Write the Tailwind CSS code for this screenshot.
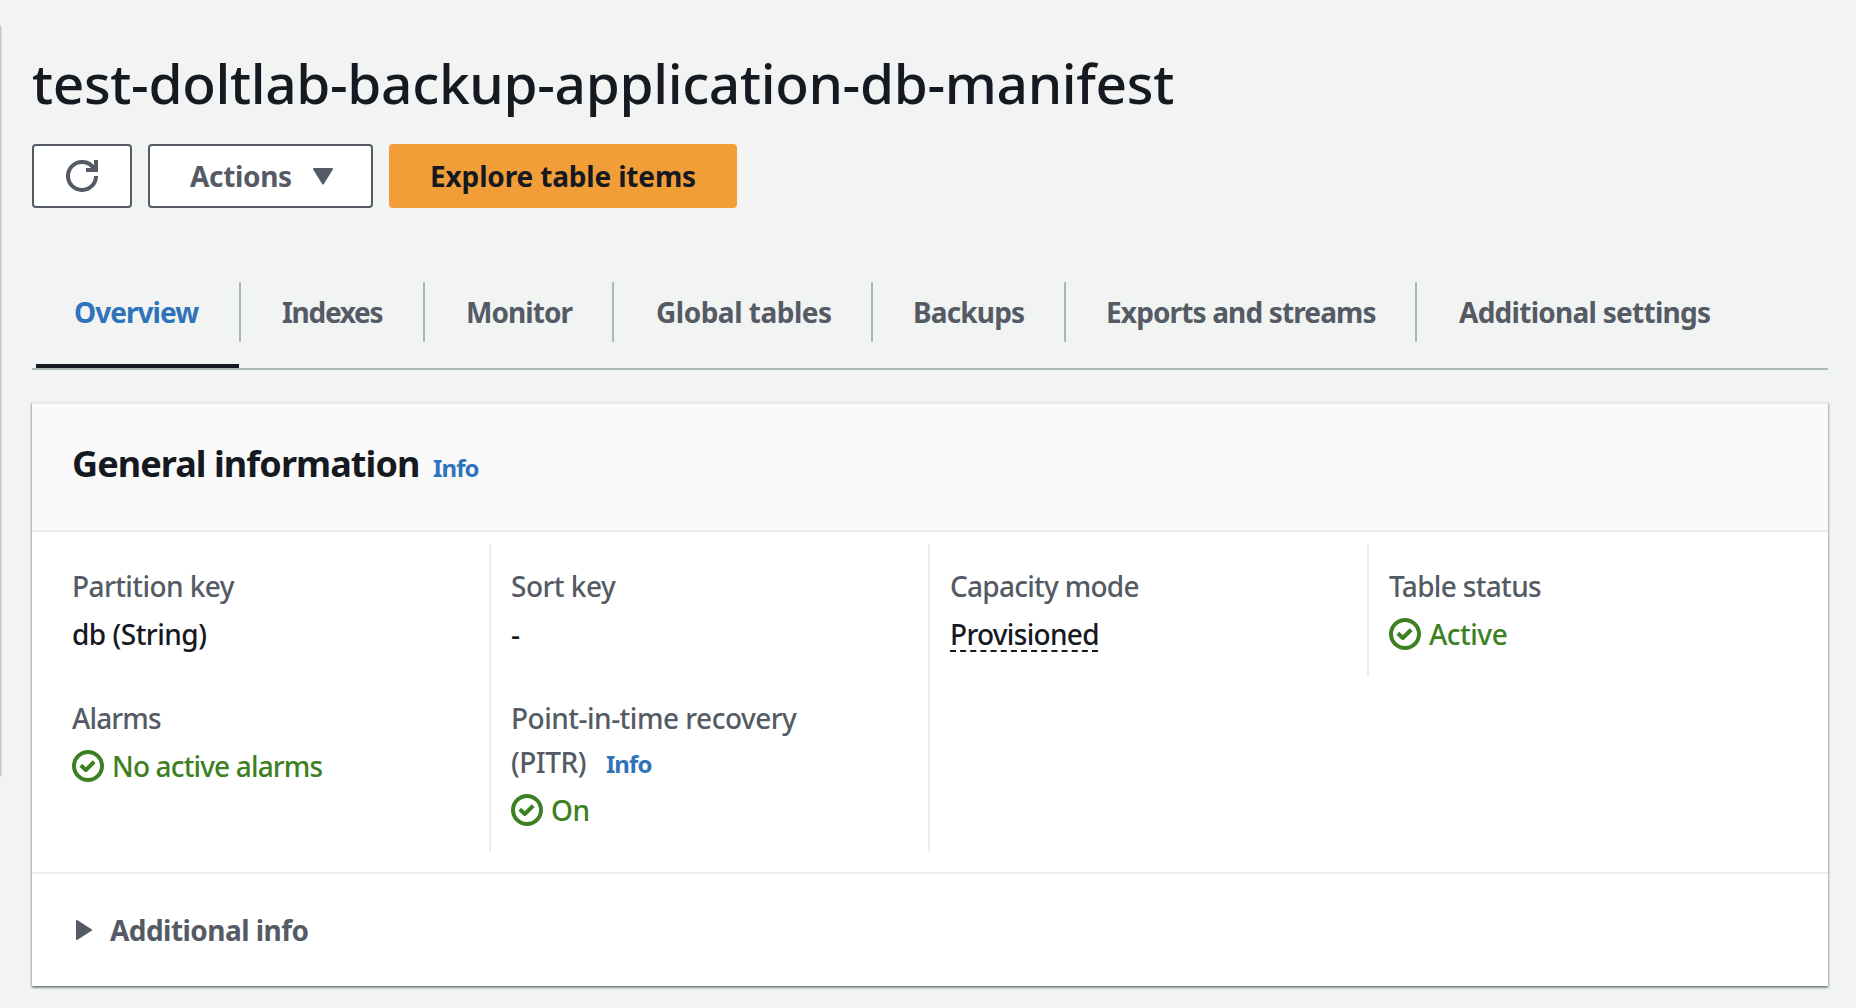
<!DOCTYPE html>
<html lang="en">
<head>
<meta charset="utf-8">
<title>test-doltlab-backup-application-db-manifest</title>
<script src="https://cdn.jsdelivr.net/npm/@tailwindcss/browser@4"></script>
</head>
<body class="relative h-[1008px] overflow-hidden bg-[#f2f3f3] pr-[28px] pl-8 font-['Noto_Sans','Open_Sans',sans-serif] text-[28px] leading-[44px] font-medium text-[#16191f]">
<svg class="hidden">
  <symbol id="ok" viewBox="0 0 16 16"><g fill="none" stroke="currentColor" stroke-width="2"><circle cx="8" cy="8" r="7"/><path d="M4.400 7.600 6.900 10l4.200-4.100" stroke-linejoin="round"/></g></symbol>
</svg>
<!-- edge of the collapsed side panel -->
<div class="absolute top-[26px] left-[-10px] h-[750px] w-[11px] bg-[#c3c4cb] shadow-[0_0_2px_#b9bcc4]"></div>

<h1 class="pt-[45px] text-[55px] leading-[76px] font-medium tracking-[-0.34px] whitespace-nowrap">test-doltlab-backup-application-db-manifest</h1>

<div class="mt-[23px] flex h-16 gap-4 font-bold">
  <button class="flex w-[100px] items-center justify-center rounded-[4px] border-2 border-[#545b64] bg-white text-[#545b64]">
    <svg class="size-8" viewBox="0 0 16 16" fill="none" stroke="currentColor" stroke-width="2"><path d="M10 5h5V0"/><path d="M15 8a6.957 6.957 0 0 1-7 7 6.957 6.957 0 0 1-7-7 6.957 6.957 0 0 1 7-7 6.870 6.870 0 0 1 6.300 4"/></svg>
  </button>
  <button class="flex w-[225px] items-center rounded-[4px] border-2 border-[#545b64] bg-white pl-10 text-[#545b64]">
    <span class="w-[123px] text-left tracking-[-0.34px]">Actions</span>
    <svg class="h-[17px] w-5" viewBox="0 0 20 17" fill="currentColor" stroke="currentColor" stroke-width="2" stroke-linejoin="round"><path d="M1 1h18L10 15.500z"/></svg>
  </button>
  <button class="flex w-[348px] items-center justify-center rounded-[4px] bg-[#f29e38] tracking-[-0.16px]">Explore table items</button>
</div>

<nav class="mt-[74px] flex h-[88px] border-b-2 border-[#aab7b8] leading-[60px] font-bold text-[#545b64] whitespace-nowrap">
  <div class="ml-1 h-[86px] w-[203px] border-b-4 border-[#16191f] pl-[38px] tracking-[-0.95px] text-[#2f73ba]">Overview</div>
  <div class="h-[60px] w-[184px] border-l-2 border-[#aab7b8] pl-[41px] tracking-[-1.3px]">Indexes</div>
  <div class="h-[60px] w-[189px] border-l-2 border-[#aab7b8] pl-[41px] tracking-[-0.95px]">Monitor</div>
  <div class="h-[60px] w-[259px] border-l-2 border-[#aab7b8] pl-[42px] tracking-[-0.49px]">Global tables</div>
  <div class="h-[60px] w-[193px] border-l-2 border-[#aab7b8] pl-[40px] tracking-[-0.85px]">Backups</div>
  <div class="h-[60px] w-[351px] border-l-2 border-[#aab7b8] pl-[40px] tracking-[-0.86px]">Exports and streams</div>
  <div class="h-[60px] border-l-2 border-[#aab7b8] pl-[42px] tracking-[-0.73px]">Additional settings</div>
</nav>

<section class="mt-8 h-[584px] border-t-2 border-[#eaeded] bg-white shadow-[0_2px_2px_0_rgba(0,28,36,.35),1px_1px_2px_0_rgba(0,28,36,.2),-1px_1px_2px_0_rgba(0,28,36,.2)]">
  <header class="flex h-32 items-baseline border-b-2 border-[#eaeded] bg-[#fafafa] pt-[38px] pl-10 whitespace-nowrap">
    <h2 class="w-[361px] text-[36px] leading-[44px] font-bold tracking-[-0.93px]">General information</h2>
    <a class="text-[24px] font-bold tracking-[-0.9px] text-[#2f73ba]">Info</a>
  </header>
  <div class="grid h-[342px] grid-cols-[457px_439px_439px_461px] grid-rows-[132px_176px] border-b-2 border-[#eaeded] pt-3 tracking-[-0.5px]">
    <div class="py-5 pl-10"><div class="mb-1 tracking-[-0.58px] text-[#545b64]">Partition key</div><div>db (String)</div></div>
    <div class="border-l-2 border-[#eaeded] py-5 pl-5"><div class="mb-1 text-[#545b64]">Sort key</div><div>-</div></div>
    <div class="border-l-2 border-[#eaeded] py-5 pl-5"><div class="mb-1 tracking-[-0.73px] text-[#545b64]">Capacity mode</div><span class="inline-block h-[40px] w-[148px] border-b-2 border-dashed border-[#16191f] tracking-[-0.7px]">Provisioned</span></div>
    <div class="border-l-2 border-[#eaeded] py-5 pl-5"><div class="mb-1 tracking-[-0.67px] text-[#545b64]">Table status</div><div class="flex items-center gap-2 text-[#3c8021]"><svg class="size-8"><use href="#ok"/></svg>Active</div></div>
    <div class="py-5 pl-10"><div class="mb-1 tracking-[-0.88px] text-[#545b64]">Alarms</div><div class="flex items-center gap-2 tracking-[-0.85px] text-[#3c8021]"><svg class="size-8"><use href="#ok"/></svg>No active alarms</div></div>
    <div class="border-l-2 border-[#eaeded] py-5 pl-5"><div class="mb-1 text-[#545b64]">Point-in-time recovery<br>(PITR)<a class="ml-[20px] text-[24px] leading-none font-bold tracking-[-0.9px] text-[#2f73ba]">Info</a></div><div class="flex items-center gap-2 text-[#3c8021]"><svg class="size-8"><use href="#ok"/></svg>On</div></div>
    <div class="border-l-2 border-[#eaeded]"></div>
  </div>
  <div class="flex h-[112px] items-center pl-11 font-bold tracking-[-0.55px] text-[#545b64]">
    <svg class="mr-[18px] h-5 w-4" viewBox="0 0 16 20" fill="currentColor" stroke="currentColor" stroke-width="2" stroke-linejoin="round"><path d="M1 1v18l14-9z"/></svg>
    Additional info
  </div>
</section>
</body>
</html>
